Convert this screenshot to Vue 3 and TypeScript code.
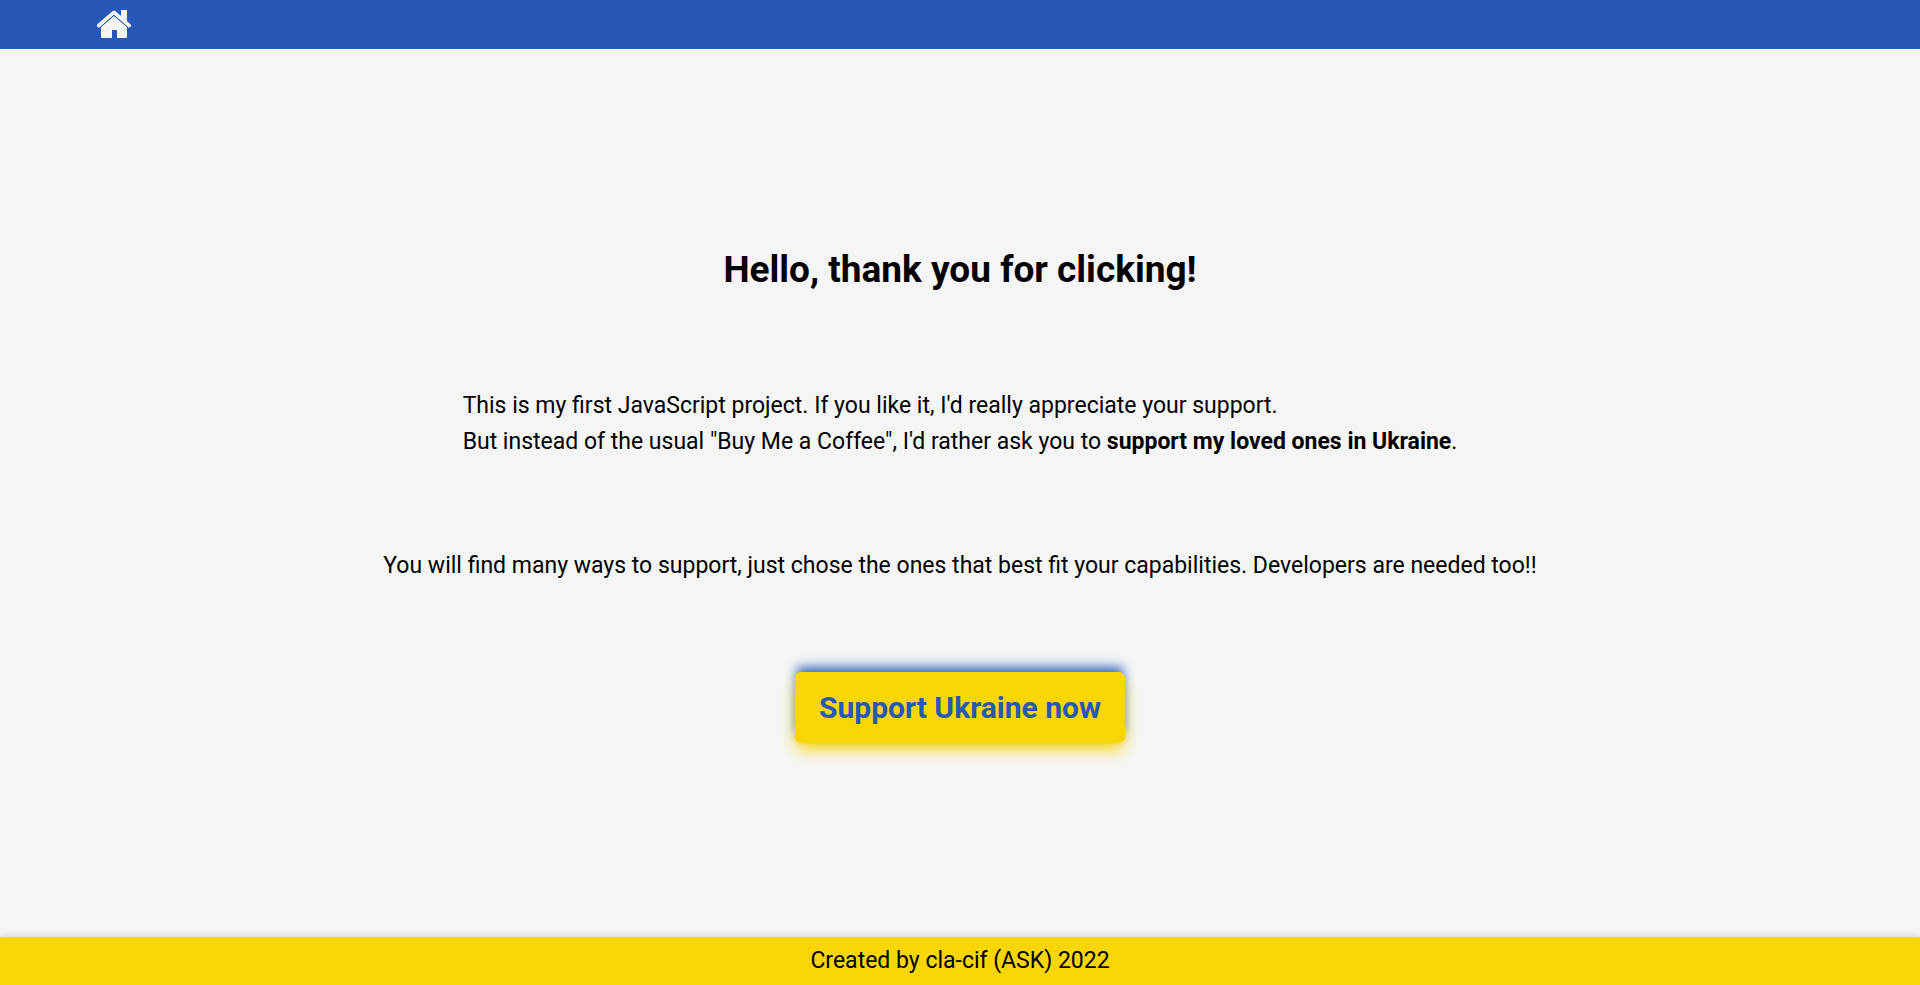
<script setup lang="ts">
const homeUrl = '#home'
const supportUrl = '#support'
</script>

<template>
  <div class="page">
    <header class="topbar">
      <a class="home" :href="homeUrl" aria-label="Home">
        <svg viewBox="0 1 36 30" width="36" height="30" aria-hidden="true">
          <path
            d="M3 16.5 L18 3.5 L33 16.5"
            fill="none"
            stroke="currentColor"
            stroke-width="4"
            stroke-linecap="round"
            stroke-linejoin="round"
          />
          <path d="M25 1H31V14L25 9Z" fill="currentColor" />
          <path
            d="M18 7L31 18V28Q31 29 30 29H21V21H16V29H6Q5 29 5 28V18Z"
            fill="currentColor"
          />
          <path d="M4 18.5L18 6.2L32 18.5" fill="none" stroke="#2757b8" stroke-width="1" />
        </svg>
      </a>
    </header>

    <main class="content">
      <h1>Hello, thank you for clicking!</h1>
      <p>
        This is my first JavaScript project. If you like it, I'd really appreciate your support.<br />
        But instead of the usual "Buy Me a Coffee", I'd rather ask you to
        <strong>support my loved ones in Ukraine</strong>.
      </p>
      <p>
        You will find many ways to support, just chose the ones that best fit your capabilities.
        Developers are needed too!!
      </p>
      <a class="support" :href="supportUrl">Support Ukraine now</a>
    </main>

    <footer class="footer">Created by cla-cif (ASK) 2022</footer>
  </div>
</template>

<style>
body {
  margin: 0;
}
</style>

<style scoped>
.page {
  display: flex;
  flex-direction: column;
  min-height: 100vh;
  background: #f5f5f5;
  color: #000;
  font-family: "Roboto", sans-serif;
  font-size: 23px;
  line-height: 36px;
}

.topbar {
  display: flex;
  align-items: center;
  height: 49px;
  padding: 0 5%;
  background: #2757b8;
}

.home {
  display: flex;
  color: #f5f5f5;
}

.content {
  display: flex;
  flex: 1;
  flex-direction: column;
  align-items: center;
  justify-content: center;
  padding-bottom: 4px;
}

h1 {
  margin: 0 0 88px;
  font-size: 37px;
  line-height: 60px;
}

p {
  margin: 0 0 88px;
}

.support {
  padding: 12px 24px;
  border-radius: 6px;
  background: #f9d602;
  box-shadow: 0 -7px 12px -2px #2f68c2, 0 8px 16px -2px #f9d602;
  color: #2757b8;
  font-size: 30px;
  font-weight: 700;
  line-height: 47px;
  text-decoration: none;
}

.footer {
  padding: 6px 0;
  background: #f9d602;
  box-shadow: 0 -1px 6px rgba(0, 0, 0, 0.15);
  text-align: center;
}
</style>
